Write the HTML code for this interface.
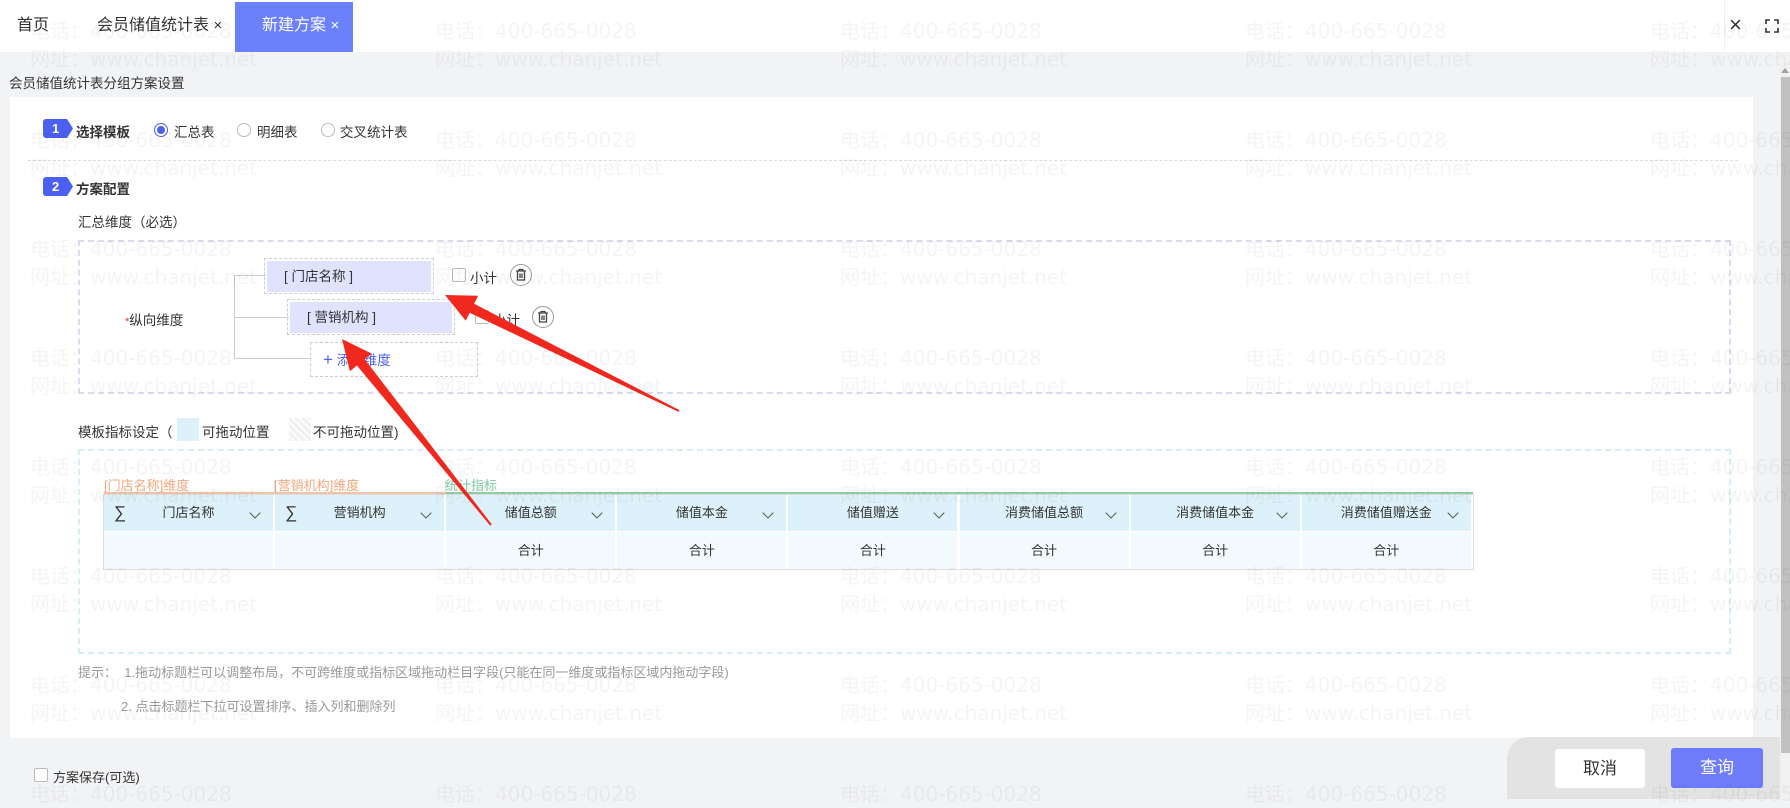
<!DOCTYPE html>
<html><head><meta charset="utf-8"><style>
*{box-sizing:border-box;margin:0;padding:0}
body{width:1790px;height:799px;overflow:hidden;background:#f2f3f5;font-family:"Liberation Sans","Noto Sans CJK SC",sans-serif;color:#333;position:relative;font-size:13.5px}
.a{position:absolute;white-space:nowrap}
.tab{position:absolute;top:0;height:52px;line-height:52px;font-size:16px;color:#333}
.cb{position:absolute;width:14px;height:14px;border:1px solid #bbb;border-radius:2px;background:#fff}
.rd{position:absolute;width:14px;height:14px;border:1px solid #bbb;border-radius:50%;background:#fff}
.trash{position:absolute;width:22px;height:22px;border:1px solid #999;border-radius:50%;background:#fff}
.badge{position:absolute;height:19px;width:30px;background:#4b5ff0;color:#fff;font-weight:bold;font-size:13px;line-height:19px;padding-left:9px;clip-path:polygon(0 0,80% 0,100% 50%,80% 100%,0 100%);border-radius:3px 0 0 3px}
.th,.td{position:absolute;width:171.1px;text-align:center;font-size:13px}
.th{top:495px;height:36px;line-height:36px;background:#dcf1f9;border-right:2px solid #fff}
.td{top:532px;height:37px;line-height:37px;background:#f3fafd;border-right:2px solid #fff}
.chev{position:absolute;right:14px;top:14px;width:8px;height:8px;border-right:1px solid #555;border-bottom:1px solid #555;transform:rotate(45deg)}
.wm{position:absolute;font-size:20px;font-family:"DejaVu Sans","Noto Sans CJK SC",sans-serif;color:rgba(0,0,0,0.045);white-space:nowrap;line-height:28px}
</style></head><body>
<div class="a" style="left:0;top:0;width:1790px;height:52px;background:#fff"></div>
<div class="tab" style="left:17px">首页</div>
<div class="tab" style="left:97px">会员储值统计表 <span style="font-size:15px">×</span></div>
<div class="tab" style="left:235px;top:2px;height:50px;line-height:48px;width:118px;background:#6b80fb;color:#fff;padding-left:27px">新建方案 <span style="font-size:15px">×</span></div>
<div class="a" style="left:1724px;top:0;width:32px;height:52px;background:#fff;border-left:1px solid #f0f0f0"></div>
<div class="a" style="left:1729px;top:12px;font-size:22px;color:#333">×</div>
<svg class="a" style="left:1765px;top:19px" width="14" height="14" viewBox="0 0 14 14" fill="none" stroke="#333" stroke-width="1.6"><path d="M1 5V1h4M9 1h4v4M13 9v4H9M5 13H1V9"/></svg>
<div class="a" style="left:1780px;top:62px;width:10px;height:737px;background:#f1f1f1"></div>
<div class="a" style="left:1781px;top:77px;width:9px;height:676px;background:#c1c1c1"></div>
<div class="a" style="left:1781px;top:64px;border:4px solid transparent;border-bottom:5px solid #a3a3a3"></div>
<div class="a" style="left:9px;top:72px;font-size:13.5px">会员储值统计表分组方案设置</div>
<div class="a" style="left:10px;top:97px;width:1743px;height:641px;background:#fff"></div>
<div class="badge" style="left:43px;top:119px">1</div>
<div class="a" style="left:76px;top:121px;font-weight:bold">选择模板</div>
<div class="rd" style="left:154px;top:123px;border-color:#4b5ff0"><div style="position:absolute;left:2px;top:2px;width:8px;height:8px;border-radius:50%;background:#4b5ff0"></div></div>
<div class="a" style="left:174px;top:121px">汇总表</div>
<div class="rd" style="left:237px;top:123px"></div>
<div class="a" style="left:257px;top:121px">明细表</div>
<div class="rd" style="left:321px;top:123px"></div>
<div class="a" style="left:340px;top:121px">交叉统计表</div>
<div class="a" style="left:28px;top:160px;width:1710px;border-top:1px dashed #ddd"></div>
<div class="badge" style="left:43px;top:177px">2</div>
<div class="a" style="left:76px;top:178px;font-weight:bold">方案配置</div>
<div class="a" style="left:78px;top:211px">汇总维度（必选）</div>
<div class="a" style="left:78px;top:240px;width:1653px;height:154px;border:2px dashed #d9dcf0"></div>
<div class="a" style="left:234px;top:275px;width:1px;height:84px;background:#ccc"></div>
<div class="a" style="left:234px;top:275px;width:32px;height:1px;background:#ccc"></div>
<div class="a" style="left:234px;top:317px;width:55px;height:1px;background:#ccc"></div>
<div class="a" style="left:234px;top:358px;width:76px;height:1px;background:#ccc"></div>
<div class="a" style="left:125px;top:309px"><span style="color:#e33;font-size:11px">*</span>纵向维度</div>
<div class="a" style="left:264px;top:258px;width:170px;height:36px;border:1px dashed #ccd"></div>
<div class="a" style="left:267px;top:261px;width:164px;height:31px;background:#dfe3fd;line-height:31px;padding-left:17px">[ 门店名称 ]</div>
<div class="cb" style="left:452px;top:268px"></div>
<div class="a" style="left:470px;top:267px">小计</div>
<div class="trash" style="left:510px;top:264px"><svg width="20" height="20" viewBox="0 0 20 20" fill="none" stroke="#444" stroke-width="1.3"><path d="M5 6h10M8 6V4.5h4V6M6.5 6v9h7V6M9 8.5v4.5M11 8.5v4.5"/></svg></div>
<div class="a" style="left:287px;top:299px;width:168px;height:36px;border:1px dashed #ccd"></div>
<div class="a" style="left:290px;top:302px;width:162px;height:31px;background:#dfe3fd;line-height:31px;padding-left:17px">[ 营销机构 ]</div>
<div class="cb" style="left:475px;top:310px"></div>
<div class="a" style="left:493px;top:309px">小计</div>
<div class="trash" style="left:532px;top:306px"><svg width="20" height="20" viewBox="0 0 20 20" fill="none" stroke="#444" stroke-width="1.3"><path d="M5 6h10M8 6V4.5h4V6M6.5 6v9h7V6M9 8.5v4.5M11 8.5v4.5"/></svg></div>
<div class="a" style="left:310px;top:342px;width:168px;height:35px;border:1px dashed #ccc;line-height:33px;padding-left:12px;color:#4b5ff0"><span style="font-size:17px">+</span> 添加维度</div>
<div class="a" style="left:78px;top:421px">模板指标设定（</div>
<div class="a" style="left:177px;top:418px;width:22px;height:23px;background:#dcf1f9"></div>
<div class="a" style="left:202px;top:421px">可拖动位置</div>
<div class="a" style="left:289px;top:418px;width:22px;height:23px;background:repeating-linear-gradient(45deg,#eee 0 2px,#fafafa 2px 5px)"></div>
<div class="a" style="left:313px;top:421px">不可拖动位置)</div>
<div class="a" style="left:78px;top:449px;width:1653px;height:205px;border:2px dashed #d6eef4"></div>
<div class="a" style="left:104px;top:475px;font-size:13px;color:#f4a77c">[门店名称]维度</div>
<div class="a" style="left:274px;top:475px;font-size:13px;color:#f4a77c">[营销机构]维度</div>
<div class="a" style="left:445px;top:475px;font-size:13px;color:#7cc99a">统计指标</div>
<div class="a" style="left:104px;top:492px;width:341px;height:3px;background:#f4c3a6"></div>
<div class="a" style="left:445px;top:492px;width:1028px;height:3px;background:#8fd0a6"></div>
<div class="a" style="left:274px;top:480px;width:1px;height:14px;background:#ddd"></div>
<div class="a" style="left:445px;top:480px;width:1px;height:14px;background:#ddd"></div>
<div class="a" style="left:103px;top:494px;width:1371px;height:76px;border:1px solid #ddd"></div>
<div class="th" style="left:104px"><span style="position:absolute;left:10px;font-size:17px">∑</span>门店名称<i class="chev"></i></div>
<div class="th" style="left:275.1px"><span style="position:absolute;left:10px;font-size:17px">∑</span>营销机构<i class="chev"></i></div>
<div class="th" style="left:446.2px">储值总额<i class="chev"></i></div>
<div class="th" style="left:617.3px">储值本金<i class="chev"></i></div>
<div class="th" style="left:788.4px">储值赠送<i class="chev"></i></div>
<div class="th" style="left:959.5px">消费储值总额<i class="chev"></i></div>
<div class="th" style="left:1130.6px">消费储值本金<i class="chev"></i></div>
<div class="th" style="left:1301.7px">消费储值赠送金<i class="chev"></i></div>
<div class="td" style="left:104px"></div><div class="td" style="left:275.1px"></div>
<div class="td" style="left:446.2px">合计</div><div class="td" style="left:617.3px">合计</div><div class="td" style="left:788.4px">合计</div><div class="td" style="left:959.5px">合计</div><div class="td" style="left:1130.6px">合计</div><div class="td" style="left:1301.7px">合计</div>
<div class="a" style="left:78px;top:662px;font-size:13px;color:#999">提示：&nbsp; 1.拖动标题栏可以调整布局，不可跨维度或指标区域拖动栏目字段(只能在同一维度或指标区域内拖动字段)</div>
<div class="a" style="left:121px;top:696px;font-size:13px;color:#999">2. 点击标题栏下拉可设置排序、插入列和删除列</div>
<div class="cb" style="left:34px;top:768px"></div>
<div class="a" style="left:53px;top:767px;font-size:13px">方案保存(可选)</div>
<div class="a" style="left:1507px;top:737px;width:273px;height:62px;background:#e3e3e3;border-radius:22px 0 0 0"></div>
<div class="a" style="left:1555px;top:749px;width:90px;height:39px;background:#fff;border-radius:3px;text-align:center;line-height:39px;font-size:17px">取消</div>
<div class="a" style="left:1671px;top:748px;width:92px;height:40px;background:#6e7cfa;border-radius:3px;text-align:center;line-height:40px;font-size:17px;color:#fff">查询</div>
<svg class="a" style="left:0;top:0" width="1790" height="799">
<polygon points="679.4,410.1 474.1,303.8 478.1,295.8 445,295 465.7,320.8 469.7,312.8 678.6,411.9" fill="#f0281e"/>
<polygon points="491.8,524.4 364.7,359.3 371.7,353.6 342,339 349.9,371.2 356.9,365.5 490.2,525.6" fill="#f0281e"/>
</svg>
<div class="a" style="left:0;top:0;width:1790px;height:799px;pointer-events:none">
<div class="wm" style="left:30px;top:17px">电话：400-665-0028<br>网址：www.chanjet.net</div><div class="wm" style="left:435px;top:17px">电话：400-665-0028<br>网址：www.chanjet.net</div><div class="wm" style="left:840px;top:17px">电话：400-665-0028<br>网址：www.chanjet.net</div><div class="wm" style="left:1245px;top:17px">电话：400-665-0028<br>网址：www.chanjet.net</div><div class="wm" style="left:1650px;top:17px">电话：400-665-0028<br>网址：www.chanjet.net</div>
<div class="wm" style="left:30px;top:126px">电话：400-665-0028<br>网址：www.chanjet.net</div><div class="wm" style="left:435px;top:126px">电话：400-665-0028<br>网址：www.chanjet.net</div><div class="wm" style="left:840px;top:126px">电话：400-665-0028<br>网址：www.chanjet.net</div><div class="wm" style="left:1245px;top:126px">电话：400-665-0028<br>网址：www.chanjet.net</div><div class="wm" style="left:1650px;top:126px">电话：400-665-0028<br>网址：www.chanjet.net</div>
<div class="wm" style="left:30px;top:235px">电话：400-665-0028<br>网址：www.chanjet.net</div><div class="wm" style="left:435px;top:235px">电话：400-665-0028<br>网址：www.chanjet.net</div><div class="wm" style="left:840px;top:235px">电话：400-665-0028<br>网址：www.chanjet.net</div><div class="wm" style="left:1245px;top:235px">电话：400-665-0028<br>网址：www.chanjet.net</div><div class="wm" style="left:1650px;top:235px">电话：400-665-0028<br>网址：www.chanjet.net</div>
<div class="wm" style="left:30px;top:344px">电话：400-665-0028<br>网址：www.chanjet.net</div><div class="wm" style="left:435px;top:344px">电话：400-665-0028<br>网址：www.chanjet.net</div><div class="wm" style="left:840px;top:344px">电话：400-665-0028<br>网址：www.chanjet.net</div><div class="wm" style="left:1245px;top:344px">电话：400-665-0028<br>网址：www.chanjet.net</div><div class="wm" style="left:1650px;top:344px">电话：400-665-0028<br>网址：www.chanjet.net</div>
<div class="wm" style="left:30px;top:453px">电话：400-665-0028<br>网址：www.chanjet.net</div><div class="wm" style="left:435px;top:453px">电话：400-665-0028<br>网址：www.chanjet.net</div><div class="wm" style="left:840px;top:453px">电话：400-665-0028<br>网址：www.chanjet.net</div><div class="wm" style="left:1245px;top:453px">电话：400-665-0028<br>网址：www.chanjet.net</div><div class="wm" style="left:1650px;top:453px">电话：400-665-0028<br>网址：www.chanjet.net</div>
<div class="wm" style="left:30px;top:562px">电话：400-665-0028<br>网址：www.chanjet.net</div><div class="wm" style="left:435px;top:562px">电话：400-665-0028<br>网址：www.chanjet.net</div><div class="wm" style="left:840px;top:562px">电话：400-665-0028<br>网址：www.chanjet.net</div><div class="wm" style="left:1245px;top:562px">电话：400-665-0028<br>网址：www.chanjet.net</div><div class="wm" style="left:1650px;top:562px">电话：400-665-0028<br>网址：www.chanjet.net</div>
<div class="wm" style="left:30px;top:671px">电话：400-665-0028<br>网址：www.chanjet.net</div><div class="wm" style="left:435px;top:671px">电话：400-665-0028<br>网址：www.chanjet.net</div><div class="wm" style="left:840px;top:671px">电话：400-665-0028<br>网址：www.chanjet.net</div><div class="wm" style="left:1245px;top:671px">电话：400-665-0028<br>网址：www.chanjet.net</div><div class="wm" style="left:1650px;top:671px">电话：400-665-0028<br>网址：www.chanjet.net</div>
<div class="wm" style="left:30px;top:780px">电话：400-665-0028</div><div class="wm" style="left:435px;top:780px">电话：400-665-0028</div><div class="wm" style="left:840px;top:780px">电话：400-665-0028</div><div class="wm" style="left:1245px;top:780px">电话：400-665-0028</div><div class="wm" style="left:1650px;top:780px">电话：400-665-0028</div>
</div>
</body></html>
